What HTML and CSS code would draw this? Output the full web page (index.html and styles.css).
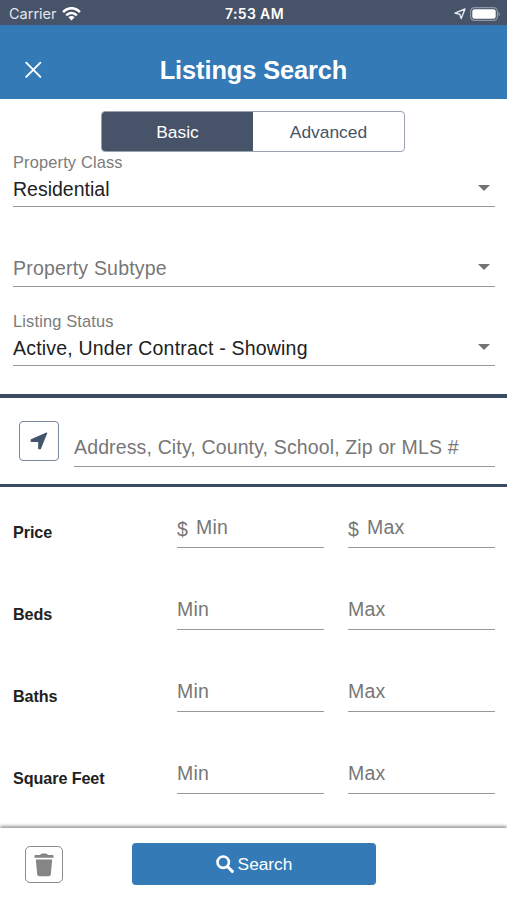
FILE: index.html
```html
<!DOCTYPE html>
<html lang="en">
<head>
<meta charset="utf-8">
<title>Listings Search</title>
<link rel="stylesheet" href="styles.css">
</head>
<body>
<div class="status">
  <div class="carrier"><span>Carrier</span>
    <svg width="19" height="14" viewBox="0 0 19 14" fill="none" stroke="#fff" stroke-width="2.5"><path d="M1.1 5.1C6-.1 13-.1 17.9 5.1M4.2 8.3c3.1-3.2 7.5-3.2 10.6 0"/><path d="M6.4 10.3c1.8-1.7 4.4-1.7 6.2 0L9.5 13.5z" fill="#fff" stroke="none"/></svg>
  </div>
  <span class="time">7:53 AM</span>
  <div class="indicators">
    <svg width="12" height="12" viewBox="0 0 12 12" fill="none" stroke="#e6eaf0" stroke-width="1.4" stroke-linejoin="round"><path d="M11 1 7.2 10.6 5.8 6.2.9 5.1z"/></svg>
    <svg width="30" height="14" viewBox="0 0 30 14"><rect x=".6" y=".6" width="26.8" height="12.8" rx="3.8" fill="none" stroke="#8d97a5" stroke-width="1.2"/><rect x="2.3" y="2.3" width="23.4" height="9.4" rx="2.2" fill="#fff"/><path d="M28.5 4.7q1.5.8 1.5 2.3t-1.5 2.3z" fill="#8d97a5"/></svg>
  </div>
</div>
<header class="header">
  <svg class="close" width="18" height="18" viewBox="0 0 18 18" stroke="#fff" stroke-width="1.9" stroke-linecap="round"><path d="m2.2 1.7 14.2 14.2m0-14.2-14.2 14.2"/></svg>
  <h1>Listings Search</h1>
</header>
<main>
  <div class="tabs"><div class="tab active">Basic</div><div class="tab">Advanced</div></div>
  <section class="selects">
    <div class="select"><span class="label">Property Class</span><span class="value short">Residential</span><i class="caret"></i></div>
    <div class="select middle"><span class="value empty">Property Subtype</span><i class="caret"></i></div>
    <div class="select"><span class="label">Listing Status</span><span class="value">Active, Under Contract - Showing</span><i class="caret"></i></div>
  </section>
  <section class="place">
    <div class="locate"><svg width="18" height="18" viewBox="0 0 18 18" fill="#43546b" stroke="#43546b" stroke-width="1.2" stroke-linejoin="round"><path d="M16.7 1.1 10.3 16.7H8.8V9.3H1.2V7.8z"/></svg></div>
    <div class="address">Address, City, County, School, Zip or MLS #</div>
  </section>
  <section class="ranges">
    <div class="range"><b>Price</b><div class="input"><span class="dollar">$</span>Min</div><div class="input"><span class="dollar">$</span>Max</div></div>
    <div class="range"><b>Beds</b><div class="input">Min</div><div class="input">Max</div></div>
    <div class="range"><b>Baths</b><div class="input">Min</div><div class="input">Max</div></div>
    <div class="range"><b>Square Feet</b><div class="input">Min</div><div class="input">Max</div></div>
  </section>
</main>
<footer class="footer">
  <div class="trash"><svg width="20" height="24" viewBox="0 0 20 24" fill="#858585"><path d="M.4 3.2Q.4 2 1.6 2H6Q7 .4 8 .4h4q1 0 2 1.6h4.4q1.2 0 1.2 1.2v1.5H.4z"/><path d="M1.8 6.4h16.4l-1.4 14.9q-.2 1.9-2 1.9H5.2q-1.8 0-2-1.9z"/></svg></div>
  <div class="search"><svg width="18" height="18" viewBox="0 0 18 18" fill="none" stroke="#fff"><circle cx="7.2" cy="7.2" r="5.7" stroke-width="2.6"/><path d="m11.5 11.5 4.8 4.8" stroke-width="3.1" stroke-linecap="round"/></svg><span>Search</span></div>
</footer>
</body>
</html>
```
FILE: styles.css
```css
* { box-sizing: border-box; }
body {
  margin: 0;
  width: 507px;
  height: 900px;
  overflow: hidden;
  display: flex;
  flex-direction: column;
  background: #fff;
  color: #212121;
  font-family: "Liberation Sans", Arial, sans-serif;
  font-size: 19.5px;
}
svg { display: block; flex: none; }
.status {
  flex: none;
  height: 25px;
  padding: 2px 7px 0 9px;
  display: grid;
  grid-template-columns: 1fr auto 1fr;
  align-items: center;
  background: #465368;
  color: #fff;
  font: 14.5px/20px Inter, sans-serif;
}
.carrier { display: flex; align-items: center; gap: 5px; color: #e3e7ec; }
.time { font-weight: 600; font-size: 14px; letter-spacing: .35px; }
.indicators { display: flex; align-items: center; justify-content: flex-end; gap: 4px; }
.header {
  flex: none;
  height: 73.5px;
  padding: 17px 24px 0;
  display: grid;
  grid-template-columns: 18px 1fr 18px;
  align-items: center;
  background: #337ab7;
  color: #fff;
}
h1 { margin: 0; text-align: center; font-size: 25.4px; line-height: 30px; letter-spacing: -.1px; }
main { flex: none; height: 729.5px; padding-top: 12.5px; }
.tabs {
  width: 304px;
  height: 41px;
  margin-left: 101px;
  display: flex;
  border: 1px solid #9ba3ae;
  border-radius: 4px;
  overflow: hidden;
}
.tab { flex: 1; text-align: center; font-size: 17.4px; line-height: 40px; color: #465368; }
.tab.active { background: #465368; color: #fff; }
.selects { padding: 0 12px 0 13px; }
.select {
  height: 55px;
  padding-bottom: 5px;
  display: grid;
  grid-template-columns: 1fr auto;
  grid-template-rows: 20px 1fr;
  align-items: end;
  border-bottom: 1px solid #999;
}
.select.middle { margin: 25px 0 24px; padding-bottom: 6px; }
.label { grid-row: 1; grid-column: 1 / 3; font-size: 16.4px; line-height: 20px; letter-spacing: .16px; color: #7b7b7b; }
.value { grid-row: 2; line-height: 24px; letter-spacing: .2px; }
.value.short { letter-spacing: 0; }
.empty { color: #777; }
.caret {
  grid-row: 2;
  grid-column: 2;
  margin: 0 5px 10px 0;
  border: 6px solid transparent;
  border-top-color: #737373;
  border-bottom: 0;
}
.place {
  height: 93px;
  margin-top: 28px;
  padding: 0 12px 0 19px;
  display: flex;
  gap: 15px;
  border: solid #3b4b61;
  border-width: 4px 0 3px;
}
.locate {
  width: 40px;
  height: 40px;
  margin-top: 23px;
  display: grid;
  place-items: center;
  border: 1.5px solid #7c899c;
  border-radius: 4px;
}
.address { flex: 1; height: 69px; padding-top: 37px; line-height: 24px; letter-spacing: .14px; color: #777; border-bottom: 1px solid #999; white-space: nowrap; }
.ranges { padding: 26px 12px 0 13px; display: flex; flex-direction: column; gap: 47px; }
.range { height: 35px; display: grid; grid-template-columns: 140px 147px 147px; column-gap: 24px; align-items: start; }
.range b { font-size: 16.2px; line-height: 39px; letter-spacing: -.1px; color: #222; white-space: nowrap; }
.input { height: 35px; display: flex; line-height: 28px; color: #777; border-bottom: 1px solid #999; letter-spacing: .15px; }
.dollar { width: 19px; line-height: 32px; }
.footer {
  position: relative;
  flex: none;
  height: 72px;
  padding: 15px 25px;
  display: flex;
  gap: 69px;
  background: #fff;
  box-shadow: 0 -2px 3px rgba(0, 0, 0, .4);
}
.trash { width: 38px; height: 37px; margin-top: 3px; display: grid; place-items: center; border: 1px solid #8c8c8c; border-radius: 5px; }
.search { width: 244px; height: 42px; display: flex; align-items: center; justify-content: center; gap: 4px; background: #337ab7; color: #fff; border-radius: 4px; font-size: 17.3px; }
```
